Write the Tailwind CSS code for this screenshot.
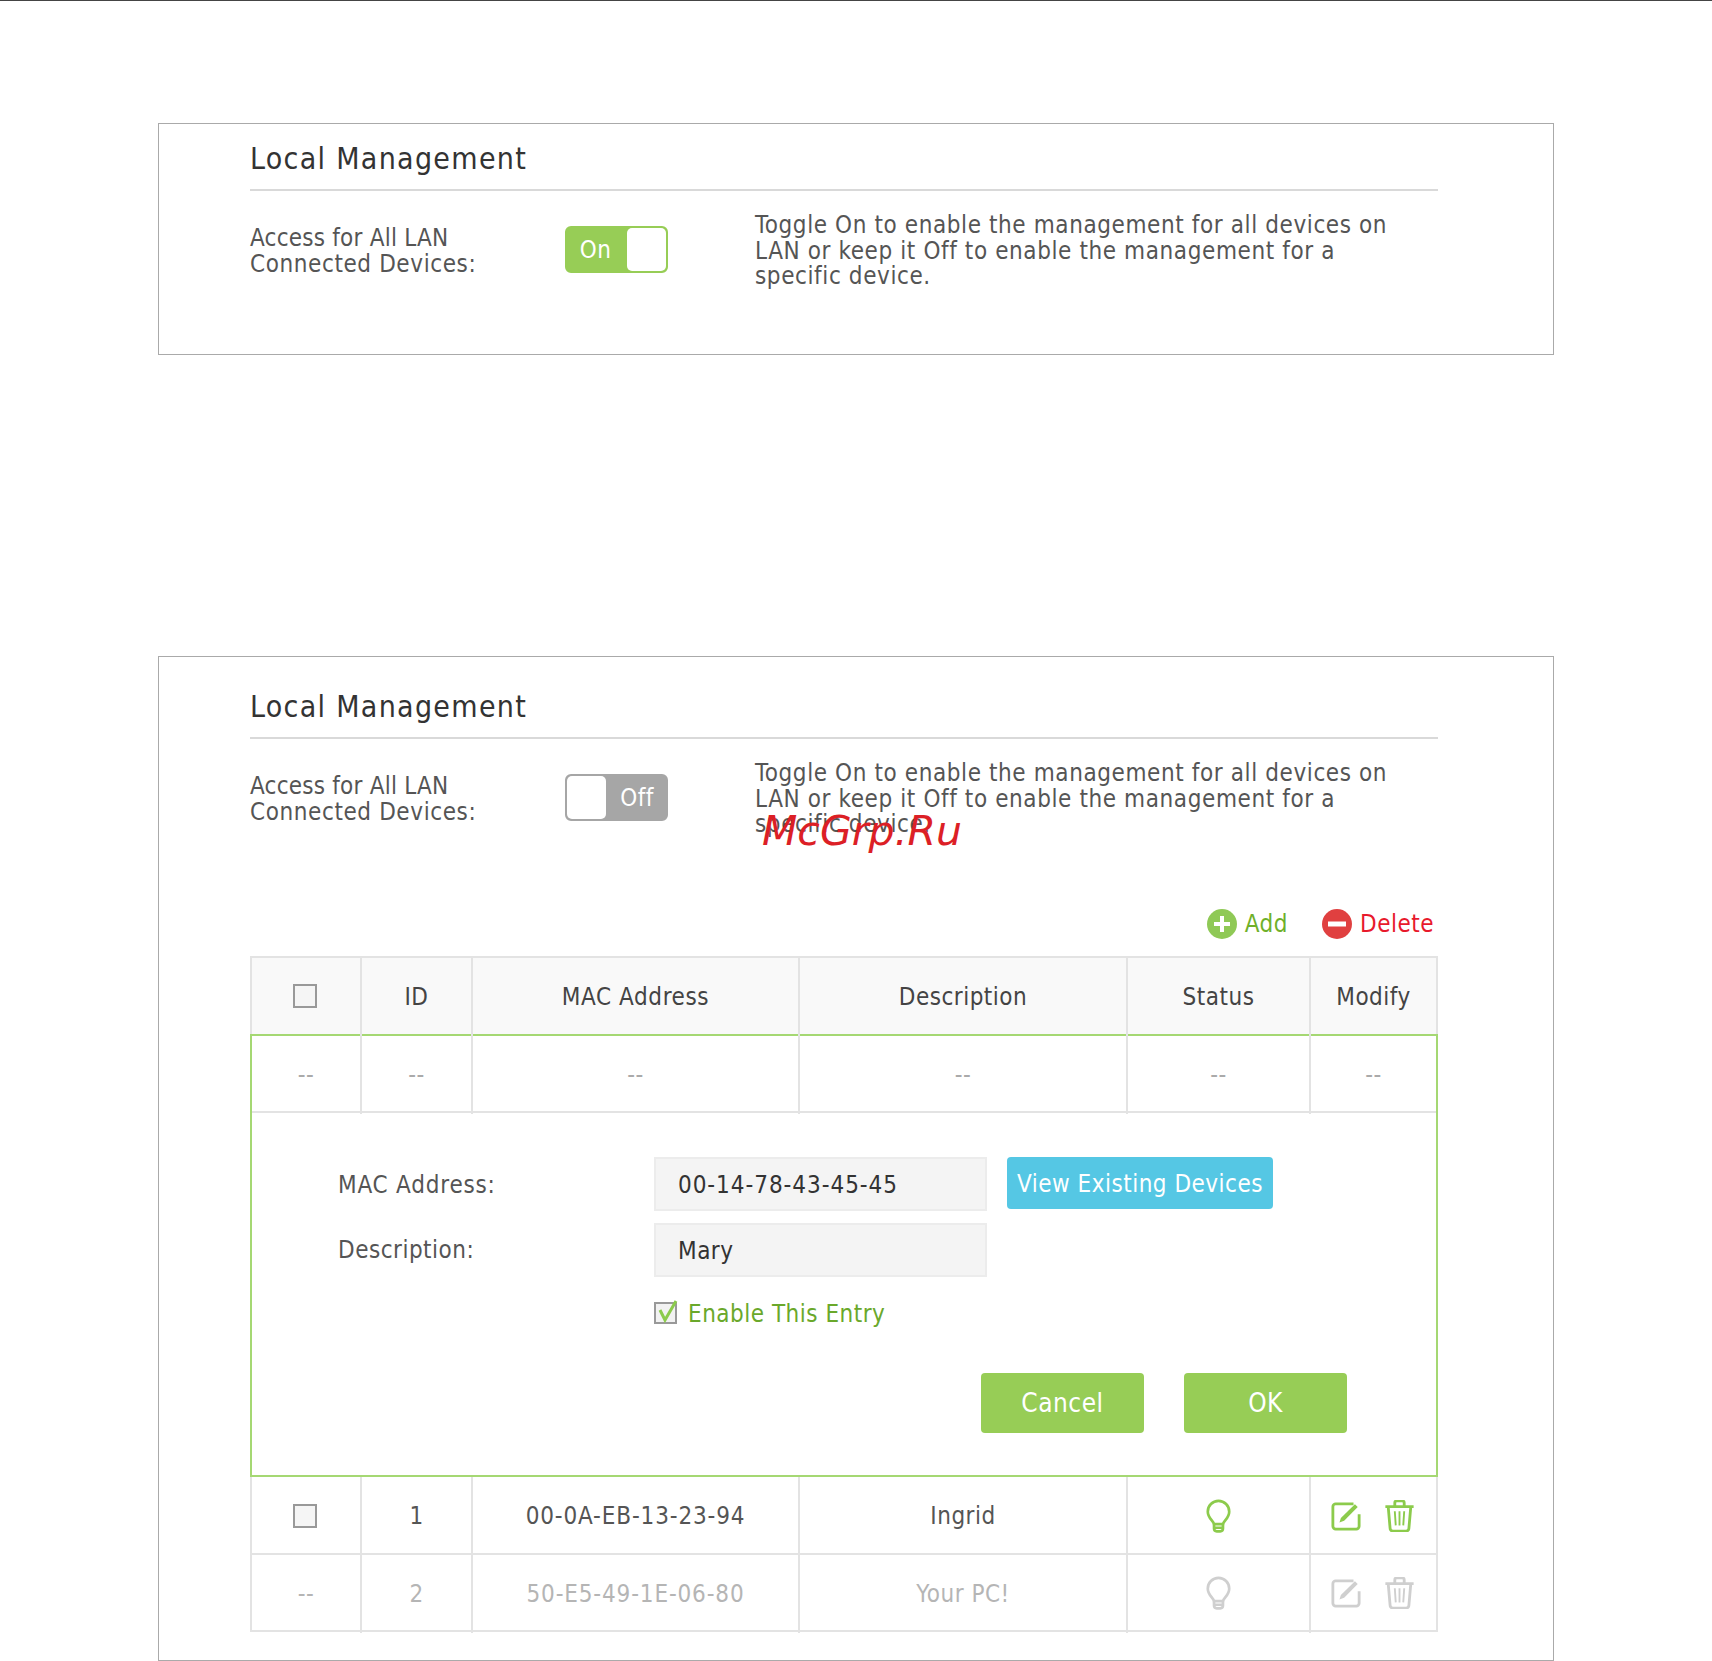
<!DOCTYPE html>
<html lang="en">
<head>
  <meta charset="UTF-8" />
  <title>Local Management</title>
  <script src="https://cdn.jsdelivr.net/npm/@tailwindcss/browser@4"></script>
</head>
<body class="relative h-[1661px] bg-white overflow-hidden font-['DejaVu_Sans_Condensed','DejaVu_Sans',sans-serif] text-[24px] tracking-[0.5px] text-[#555]">
  <div class="h-px bg-[#444]"></div>

  <!-- Toggle on -->
  <section class="mt-[122px] ml-[158px] w-[1396px] h-[232px] border border-[#aaa] pl-[91px] pr-[115px]">
    <h2 class="h-[67px] pt-[17px] border-b-2 border-[#d9d9d9] text-[30px] leading-[36px] tracking-[1.3px] text-[#333]">Local Management</h2>
    <div class="flex mt-[22px]">
      <p class="w-[315px] mt-[13px] leading-[25.5px]"><span class="tracking-[0.22px]">Access for All LAN</span><br /><span class="tracking-[0.6px]">Connected Devices:</span></p>
      <div class="flex w-[103px] h-[47px] mt-[13px] rounded-[6px] bg-[#97cd56] border-2 border-[#97cd56]">
        <span class="w-[57px] text-center leading-[45px] text-white">On</span>
        <span class="ml-[3px] w-[39px] rounded-[5px] bg-white"></span>
      </div>
      <p class="ml-[87px] w-[660px] leading-[25.7px] tracking-[0.6px]">Toggle On to enable the management for all devices on LAN or keep it Off to enable the management for a specific device.</p>
    </div>
  </section>

  <!-- Toggle off -->
  <section class="mt-[301px] ml-[158px] w-[1396px] h-[1005px] border border-[#aaa] pl-[91px] pr-[115px]">
    <h2 class="h-[82px] pt-[32px] border-b-2 border-[#d9d9d9] text-[30px] leading-[36px] tracking-[1.3px] text-[#333]">Local Management</h2>
    <div class="flex mt-[22px]">
      <p class="w-[315px] mt-[13px] leading-[25.5px]"><span class="tracking-[0.22px]">Access for All LAN</span><br /><span class="tracking-[0.6px]">Connected Devices:</span></p>
      <div class="flex w-[103px] h-[47px] mt-[13px] rounded-[6px] bg-[#a6a6a6] border-2 border-[#a6a6a6]">
        <span class="w-[39px] rounded-[5px] bg-white"></span>
        <span class="ml-[2px] w-[58px] text-center leading-[44px] text-white">Off</span>
      </div>
      <p class="ml-[87px] w-[660px] leading-[25.7px] tracking-[0.6px]">Toggle On to enable the management for all devices on LAN or keep it Off to enable the management for a specific device.</p>
    </div>

    <!-- Toolbar -->
    <div class="flex justify-end items-center h-[32px] mt-[70px] pr-[4px]">
      <svg class="w-[30px] h-[30px]" viewBox="0 0 30 30"><circle cx="15" cy="15" r="15" fill="#8fc956" /><path d="M15 7v16M7 15h16" stroke="#fff" stroke-width="4" /></svg>
      <span class="ml-[8px] text-[#6fb02a]">Add</span>
      <svg class="ml-[34px] w-[30px] h-[30px]" viewBox="0 0 30 30"><circle cx="15" cy="15" r="15" fill="#e04040" /><path d="M6 15h18" stroke="#fff" stroke-width="5" /></svg>
      <span class="ml-[8px] text-[#e8192c]">Delete</span>
    </div>

    <!-- Table -->
    <div class="mt-[16px] w-[1188px] text-center">
      <div class="grid grid-cols-[110px_111px_327px_328px_183px_125px] h-[78px] border-2 border-b-0 border-[#e3e3e3] bg-[#f9f9f9] text-[#444] leading-[78px] [&>div]:border-r-2 [&>div]:border-[#e3e3e3]">
        <div class="flex items-center justify-center"><span class="block w-[24px] h-[24px] -ml-[2px] border-2 border-[#999] bg-[#f5f5f5] -mt-[2px]"></span></div>
        <div>ID</div>
        <div class="tracking-[0.6px]">MAC Address</div>
        <div>Description</div>
        <div>Status</div>
        <div class="border-r-0!">Modify</div>
      </div>

      <div class="h-[443px] border-2 border-[#a5d873]">
        <div class="grid grid-cols-[110px_111px_327px_328px_183px_125px] h-[77px] border-b-2 border-[#e3e3e3] text-[#aaa] leading-[78px] [&>div]:border-r-2 [&>div]:border-[#e3e3e3]">
          <div>--</div><div>--</div><div>--</div><div>--</div><div>--</div><div class="border-r-0!">--</div>
        </div>
        <div class="text-left">
          <div class="flex pt-[44px] pl-[86px]">
            <span class="w-[316px] h-[54px] leading-[56px] tracking-[0.8px]">MAC Address:</span>
            <span class="w-[333px] h-[54px] pl-[22px] bg-[#f4f4f4] border-2 border-[#ececec] leading-[52px] tracking-[0.95px] text-[#333]">00-14-78-43-45-45</span>
            <span class="ml-[20px] w-[266px] h-[52px] rounded-[4px] bg-[#55c7e4] text-center leading-[55px] text-white">View Existing Devices</span>
          </div>
          <div class="flex mt-[12px] pl-[86px]">
            <span class="w-[316px] h-[54px] leading-[54px]">Description:</span>
            <span class="w-[333px] h-[54px] pl-[22px] bg-[#f4f4f4] border-2 border-[#ececec] leading-[52px] text-[#333]">Mary</span>
          </div>
          <div class="flex items-center mt-[23px] pl-[402px] h-[24px]">
            <svg class="w-[24px] h-[24px]" viewBox="0 0 24 24"><rect x="1" y="3" width="21" height="20" fill="#f2f2f2" stroke="#999" stroke-width="2" /><path d="M6 10l5 10L22 1" fill="none" stroke="#8ccb4c" stroke-width="3" /></svg>
            <span class="ml-[10px] mt-[4px] text-[#6aa82b]">Enable This Entry</span>
          </div>
          <div class="flex justify-end gap-[40px] mt-[49px] pr-[89px]">
            <span class="w-[163px] h-[60px] rounded-[4px] bg-[#97cd56] text-center leading-[60px] text-[26px] text-white">Cancel</span>
            <span class="w-[163px] h-[60px] rounded-[4px] bg-[#97cd56] text-center leading-[60px] text-[26px] text-white">OK</span>
          </div>
        </div>
      </div>

      <div class="grid grid-cols-[110px_111px_327px_328px_183px_125px] h-[78px] border-x-2 border-b-2 border-[#e3e3e3] text-[#555] leading-[79px] [&>div]:border-r-2 [&>div]:border-[#e3e3e3]">
        <div class="flex items-center justify-center"><span class="block w-[24px] h-[24px] -ml-[2px] border-2 border-[#999] bg-[#f5f5f5] -mt-[2px]"></span></div>
        <div>1</div>
        <div class="tracking-[0.85px]">00-0A-EB-13-23-94</div>
        <div>Ingrid</div>
        <div class="flex items-center justify-center">
          <svg class="w-[25px] h-[36px]" viewBox="0 0 28 38" fill="none" stroke="#8ccb4c" stroke-width="3"><path d="M9 27c-1-4-7-7-7-14a12 12 0 0 1 24 0c0 7-6 10-7 14z" /><path d="M9 27v5a3 3 0 0 0 3 3h4a3 3 0 0 0 3-3v-5M9 31h10" /></svg>
        </div>
        <div class="flex items-center justify-center gap-[23px] pr-[2px] pb-[2px] border-r-0!">
          <svg class="w-[30px] h-[30px]" viewBox="0 0 32 32" fill="none" stroke="#8ccb4c" stroke-width="3"><path d="M30 14v13a3 3 0 0 1-3 3H5a3 3 0 0 1-3-3V6a3 3 0 0 1 3-3h19" /><path d="M9 23l1.5-5L25.5 3.5l3 3L14 21z" fill="#8ccb4c" stroke="none" /></svg>
          <svg class="w-[31px] h-[32px]" viewBox="0 0 32 34" fill="none" stroke="#8ccb4c" stroke-width="3"><path d="M1 7h30M11 6V3a2 2 0 0 1 2-2h6a2 2 0 0 1 2 2v3" /><path d="M4 7l2 23a3 3 0 0 0 3 3h14a3 3 0 0 0 3-3l2-23" /><path d="M11 12l1 15M16 12v15M21 12l-1 15" stroke-width="2" /></svg>
        </div>
      </div>

      <div class="grid grid-cols-[110px_111px_327px_328px_183px_125px] h-[77px] border-x-2 border-b-2 border-[#e3e3e3] text-[#b5b5b5] leading-[78px] [&>div]:border-r-2 [&>div]:border-[#e3e3e3]">
        <div>--</div>
        <div>2</div>
        <div class="tracking-[0.85px]">50-E5-49-1E-06-80</div>
        <div>Your PC!</div>
        <div class="flex items-center justify-center">
          <svg class="w-[25px] h-[36px]" viewBox="0 0 28 38" fill="none" stroke="#cfcfcf" stroke-width="3"><path d="M9 27c-1-4-7-7-7-14a12 12 0 0 1 24 0c0 7-6 10-7 14z" /><path d="M9 27v5a3 3 0 0 0 3 3h4a3 3 0 0 0 3-3v-5M9 31h10" /></svg>
        </div>
        <div class="flex items-center justify-center gap-[23px] pr-[2px] pb-[2px] border-r-0!">
          <svg class="w-[30px] h-[30px]" viewBox="0 0 32 32" fill="none" stroke="#cfcfcf" stroke-width="3"><path d="M30 14v13a3 3 0 0 1-3 3H5a3 3 0 0 1-3-3V6a3 3 0 0 1 3-3h19" /><path d="M9 23l1.5-5L25.5 3.5l3 3L14 21z" fill="#cfcfcf" stroke="none" /></svg>
          <svg class="w-[31px] h-[32px]" viewBox="0 0 32 34" fill="none" stroke="#cfcfcf" stroke-width="3"><path d="M1 7h30M11 6V3a2 2 0 0 1 2-2h6a2 2 0 0 1 2 2v3" /><path d="M4 7l2 23a3 3 0 0 0 3 3h14a3 3 0 0 0 3-3l2-23" /><path d="M11 12l1 15M16 12v15M21 12l-1 15" stroke-width="2" /></svg>
        </div>
      </div>
    </div>
  </section>

  <!-- Watermark -->
  <div class="absolute left-[762px] top-[806px] text-[41px] leading-[50px] italic tracking-normal text-[#dc1f26] font-['DejaVu_Sans',sans-serif]">McGrp.Ru</div>
</body>
</html>
